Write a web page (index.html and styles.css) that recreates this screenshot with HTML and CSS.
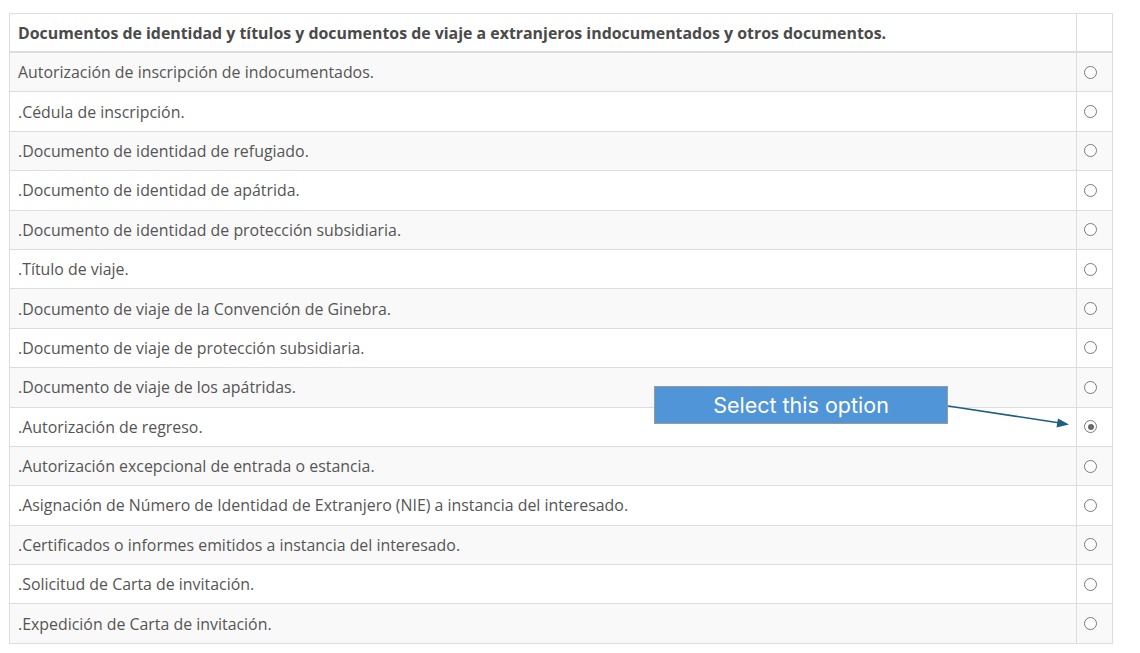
FILE: index.html
```html
<!DOCTYPE html>
<html lang="es">
<head>
    <meta charset="UTF-8">
    <title>Documentos de identidad</title>
    <link rel="stylesheet" href="styles.css">
</head>
<body>
    <div class="tabla">
        <div class="fila cabecera">
            <div class="texto">Documentos de identidad y títulos y documentos de viaje a extranjeros indocumentados y otros documentos.</div>
            <div class="opcion"></div>
        </div>
        <div class="fila"><div class="texto">Autorización de inscripción de indocumentados.</div><div class="opcion"><span class="radio"></span></div></div>
        <div class="fila"><div class="texto">.Cédula de inscripción.</div><div class="opcion"><span class="radio"></span></div></div>
        <div class="fila"><div class="texto">.Documento de identidad de refugiado.</div><div class="opcion"><span class="radio"></span></div></div>
        <div class="fila"><div class="texto">.Documento de identidad de apátrida.</div><div class="opcion"><span class="radio"></span></div></div>
        <div class="fila"><div class="texto">.Documento de identidad de protección subsidiaria.</div><div class="opcion"><span class="radio"></span></div></div>
        <div class="fila"><div class="texto">.Título de viaje.</div><div class="opcion"><span class="radio"></span></div></div>
        <div class="fila"><div class="texto">.Documento de viaje de la Convención de Ginebra.</div><div class="opcion"><span class="radio"></span></div></div>
        <div class="fila"><div class="texto">.Documento de viaje de protección subsidiaria.</div><div class="opcion"><span class="radio"></span></div></div>
        <div class="fila"><div class="texto">.Documento de viaje de los apátridas.</div><div class="opcion"><span class="radio"></span></div></div>
        <div class="fila"><div class="texto">.Autorización de regreso.</div><div class="opcion"><span class="radio marcado"></span></div></div>
        <div class="fila"><div class="texto">.Autorización excepcional de entrada o estancia.</div><div class="opcion"><span class="radio"></span></div></div>
        <div class="fila"><div class="texto">.Asignación de Número de Identidad de Extranjero (NIE) a instancia del interesado.</div><div class="opcion"><span class="radio"></span></div></div>
        <div class="fila"><div class="texto">.Certificados o informes emitidos a instancia del interesado.</div><div class="opcion"><span class="radio"></span></div></div>
        <div class="fila"><div class="texto">.Solicitud de Carta de invitación.</div><div class="opcion"><span class="radio"></span></div></div>
        <div class="fila"><div class="texto">.Expedición de Carta de invitación.</div><div class="opcion"><span class="radio"></span></div></div>
    </div>

    <!-- Indicación -->
    <div class="aviso">Select this option</div>
    <svg class="flecha" width="130" height="30" viewBox="0 0 130 30">
        <line x1="0" y1="3" x2="112" y2="20" stroke="#1d5f80" stroke-width="1.5"/>
        <polygon points="121,21.5 110,15.5 108.5,24.5" fill="#1d5f80"/>
    </svg>
</body>
</html>
```

FILE: styles.css
```css
body {
    margin: 0;
    padding: 13px 0 0 9px;
    background: #fff;
    font-family: 'Open Sans', 'Noto Sans', sans-serif;
    font-size: 15.9px;
    color: #555;
}

/* Tabla */
.tabla {
    width: 1102px;
    border: 1px solid #ddd;
    border-top: none;
}

.fila {
    display: flex;
    height: 39.4px;
    box-sizing: border-box;
    border-top: 1px solid #ddd;
}

.fila:nth-child(even) {
    background: #f9f9f9;
}

.cabecera {
    height: 40px;
    border-bottom: 2px solid #ddd;
    font-weight: bold;
    color: #4a4a4a;
}

.cabecera + .fila {
    border-top: none;
    height: 38.4px;
}

.texto {
    flex: 1;
    display: flex;
    align-items: center;
    padding: 0 8px;
    white-space: nowrap;
}

.opcion {
    width: 28px;
    padding-left: 7px;
    border-left: 1px solid #ddd;
    display: flex;
    align-items: center;
}

/* Radio */
.radio {
    width: 11px;
    height: 11px;
    border: 1px solid #7a7a7a;
    border-radius: 50%;
    background: #fff;
    position: relative;
}

.radio.marcado::after {
    content: "";
    position: absolute;
    top: 2.5px;
    left: 2.5px;
    width: 6px;
    height: 6px;
    border-radius: 50%;
    background: #6a6a6a;
}

/* Indicación */
.aviso {
    position: absolute;
    left: 654px;
    top: 386px;
    width: 292px;
    height: 36px;
    background: #4f95d8;
    border: 1px solid #9a9a9a;
    color: #fff;
    font-family: 'Inter', 'Lato', sans-serif;
    font-size: 21.5px;
    display: flex;
    align-items: center;
    justify-content: center;
}

.flecha {
    position: absolute;
    left: 948px;
    top: 403px;
}
```
